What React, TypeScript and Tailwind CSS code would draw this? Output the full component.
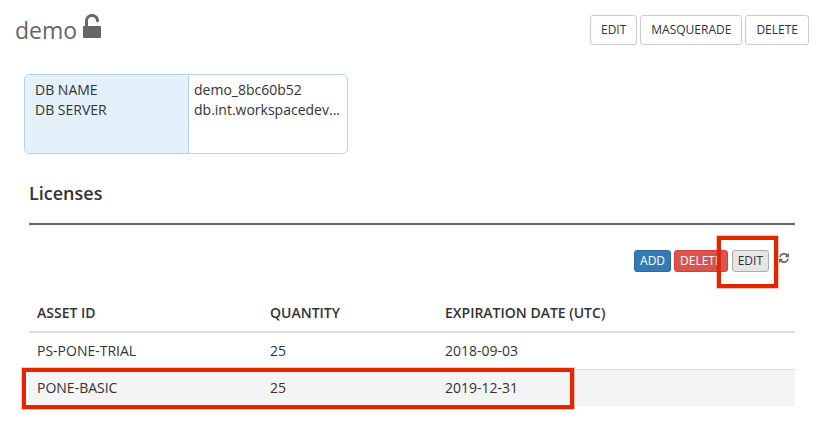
import { type ButtonHTMLAttributes } from "react";

interface License {
  assetId: string;
  quantity: number;
  expires: string;
}

const licenses: License[] = [
  { assetId: "PS-PONE-TRIAL", quantity: 25, expires: "2018-09-03" },
  { assetId: "PONE-BASIC", quantity: 25, expires: "2019-12-31" },
];

const details = [
  { label: "DB NAME", value: "demo_8bc60b52" },
  { label: "DB SERVER", value: "db.int.workspacedev..." },
];

const smallButton = "h-[22px] rounded-[3px] border px-[5px] text-xs leading-none";

function UnlockIcon() {
  return (
    <svg viewBox="0 0 18 24" className="h-6 w-[18px]" aria-hidden="true">
      <path d="M3.5 13V7a5.5 5.5 0 0 1 11-.2" fill="none" stroke="#666" strokeWidth="3" strokeLinecap="round" />
      <rect y="12" width="18" height="12" rx="0.8" fill="#666" />
    </svg>
  );
}

function RefreshIcon() {
  return (
    <svg viewBox="0 0 1536 1536" className="size-[10px]" fill="#666" aria-hidden="true">
      <path d="M1511 928q0 5-1 7-64 268-268 434.5T764 1536q-146 0-282.5-55T238 1324l-129 129q-19 19-45 19t-45-19-19-45V960q0-26 19-45t45-19h448q26 0 45 19t19 45-19 45l-137 137q71 66 161 102t187 36q134 0 250-65t186-179q11-17 53-117 8-23 30-23h192q13 0 22.5 9.5t9.5 22.5zm25-800v448q0 26-19 45t-45 19h-448q-26 0-45-19t-19-45 19-45l138-138Q969 256 768 256q-134 0-250 65T332 500q-11 17-53 117-8 23-30 23H50q-13 0-22.5-9.5T18 608v-7q65-268 270-434.5T768 0q146 0 284 55.5T1297 212l130-129q19-19 45-19t45 19 19 45z" />
    </svg>
  );
}

function HeaderButton(props: ButtonHTMLAttributes<HTMLButtonElement>) {
  return (
    <button
      type="button"
      className="h-[30px] rounded-[3px] border border-[#ccc] bg-white px-[10px] text-xs"
      {...props}
    />
  );
}

// Red frame laid over the element that the reader should look at
function Highlight({ className }: { className: string }) {
  return (
    <div
      className={`pointer-events-none absolute z-10 border-4 border-[#e42500] ring-1 ring-[#e42500]/25 ${className}`}
    />
  );
}

export default function App() {
  return (
    <main className="bg-white pt-[14px] pb-4 font-['Open_Sans',sans-serif] text-sm text-[#333]">
      <header className="flex items-start justify-between pr-[17px] pl-[15px]">
        <h1 className="flex items-start gap-1.5 text-[23px] leading-[33px] text-[#666]">
          demo
          <UnlockIcon />
        </h1>
        <div className="flex gap-[3px] pt-px">
          <HeaderButton>EDIT</HeaderButton>
          <HeaderButton>MASQUERADE</HeaderButton>
          <HeaderButton>DELETE</HeaderButton>
        </div>
      </header>

      <dl className="mt-[27px] ml-6 grid h-20 w-[324px] grid-cols-[164px_1fr] grid-rows-[25px_1fr] overflow-hidden rounded-[5px] border border-[#b3d3ea]">
        {details.map((item) => (
          <div key={item.label} className="group contents">
            <dt className="border-r border-[#b3d3ea] bg-[#e4f0fa] pl-[10px] group-first:pt-[5px]">{item.label}</dt>
            <dd className="px-[5px] group-first:pt-[5px]">{item.value}</dd>
          </div>
        ))}
      </dl>

      <section className="mt-7 mr-[31px] ml-[29px]">
        <h2 className="border-b-2 border-[#666] pb-[18px] text-lg leading-[23px] font-semibold">Licenses</h2>

        <div className="mt-[25px] flex items-start justify-end gap-[3px] pr-[6px]">
          <button type="button" className={`${smallButton} border-[#2e6da4] bg-[#337ab7] text-white`}>
            ADD
          </button>
          <button type="button" className={`${smallButton} border-[#d43f3a] bg-[#d9534f] text-white`}>
            DELETE
          </button>
          <div className="relative ml-px flex">
            <button type="button" className={`${smallButton} border-[#adadad] bg-[#e6e6e6]`}>
              EDIT
            </button>
            <Highlight className="-top-[14px] -right-[9px] -bottom-4 -left-[15px]" />
          </div>
          <button type="button" aria-label="Refresh" className="mt-[3px] ml-[7px]">
            <RefreshIcon />
          </button>
        </div>

        <div className="relative mt-[23px]">
          <table className="w-full table-fixed border-collapse text-left">
            <thead>
              <tr className="border-b-2 border-[#ddd]">
                <th className="w-[233px] p-2 font-semibold">ASSET ID</th>
                <th className="w-[175px] p-2 font-semibold">QUANTITY</th>
                <th className="p-2 font-semibold">EXPIRATION DATE (UTC)</th>
              </tr>
            </thead>
            <tbody>
              {licenses.map((license) => (
                <tr key={license.assetId} className="border-t border-[#ddd] even:bg-[#f4f4f4]">
                  <td className="p-2">{license.assetId}</td>
                  <td className="p-2">{license.quantity}</td>
                  <td className="p-2">{license.expires}</td>
                </tr>
              ))}
            </tbody>
          </table>
          <Highlight className="-bottom-[3px] -left-[7px] h-[41px] w-[552px]" />
        </div>
      </section>
    </main>
  );
}
